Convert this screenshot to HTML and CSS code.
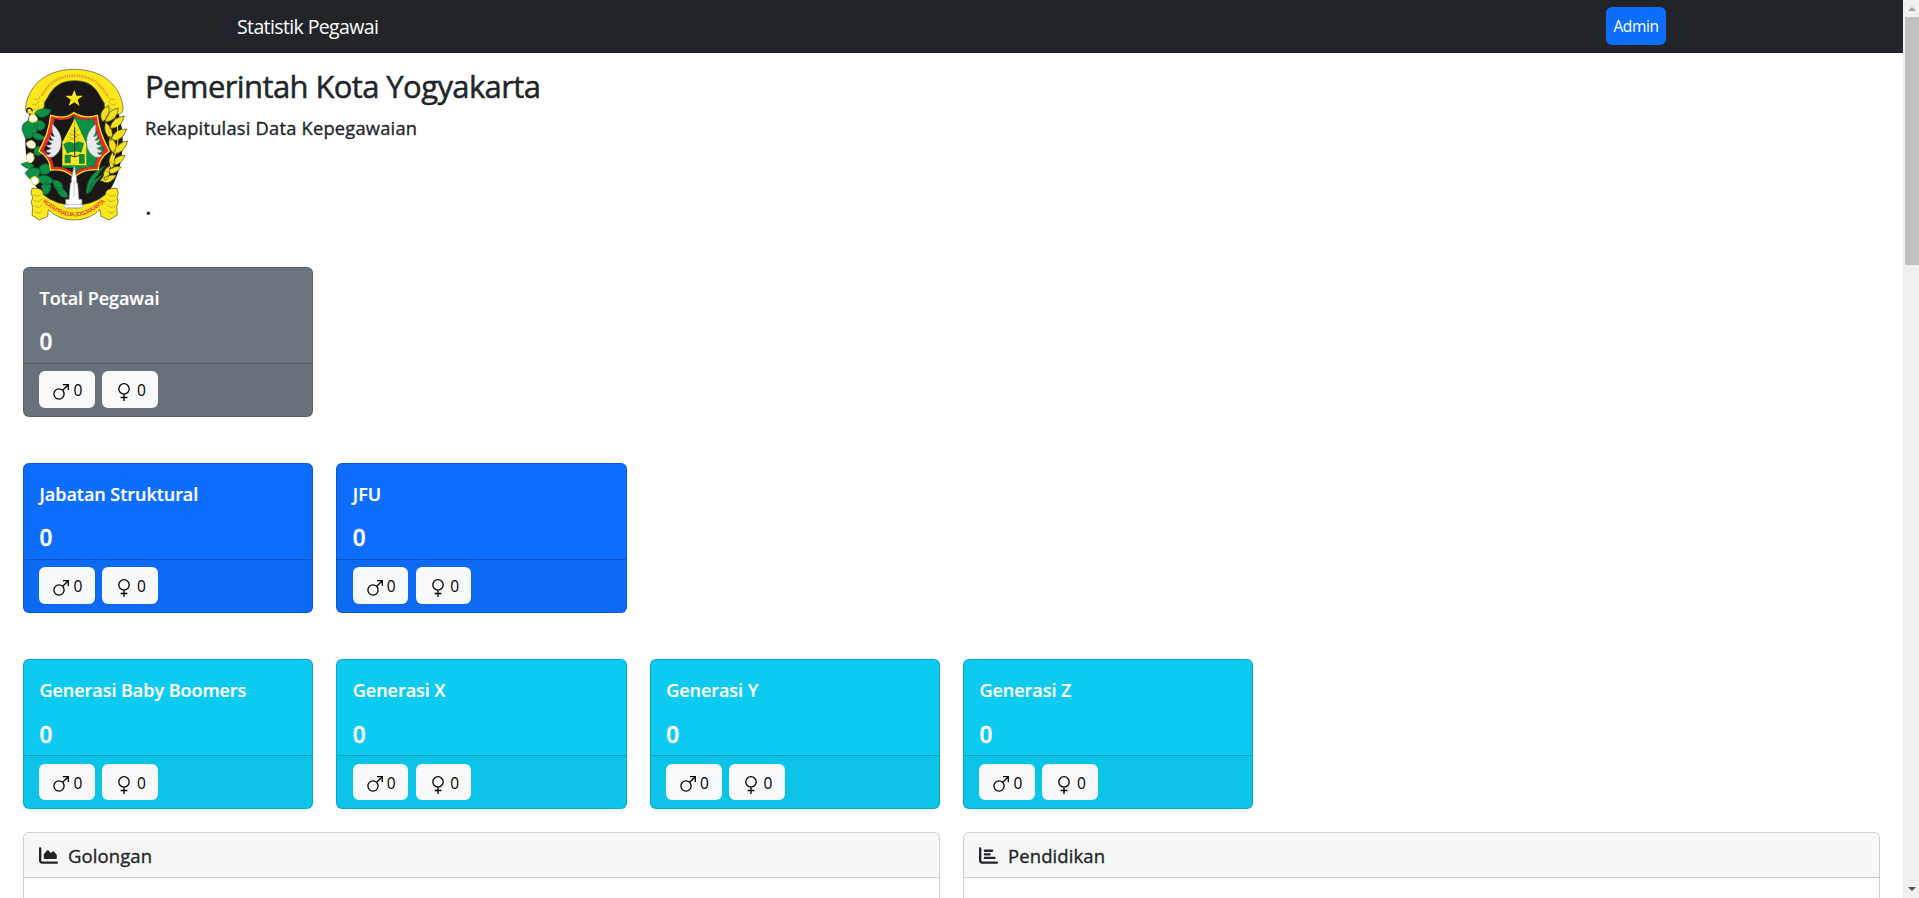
FILE: index.html
```html
<!DOCTYPE html>
<html lang="id">
<head>
<meta charset="utf-8">
<title>Statistik Pegawai</title>
<link rel="stylesheet" href="styles.css">
</head>
<body>
<svg width="0" height="0" class="defs">
  <symbol id="male" viewBox="0 0 16 16"><path d="M9.700 6.300 15.3.8M10 .7h5.3V6" fill="none" stroke="#000" stroke-width="1.3"/><circle cx="6" cy="10" r="5.1" fill="none" stroke="#000" stroke-width="1.3"/></symbol>
  <symbol id="female" viewBox="0 0 12 18"><path d="M6 11.2V18M2.6 14.5h6.8" fill="none" stroke="#000" stroke-width="1.3"/><circle cx="6" cy="5.9" r="5.2" fill="none" stroke="#000" stroke-width="1.3"/></symbol>
</svg>
<div class="page">
  <nav class="navbar"><span class="brand">Statistik Pegawai</span><a class="admin">Admin</a></nav>
  <header class="heading">
    <svg class="logo" viewBox="60 50 330 465">
      <ellipse cx="222" cy="275" rx="146" ry="213" fill="#1a1717"/>
      <path d="M77 168C90 90 155 57 223 57s133 33 146 111q3 25-20 24c-22 2-38-10-36-33l-12-20C284 105 262 91 223 91s-63 17-80 50l-10 16c2 23-12 37-34 35q-24 0-22-24z" fill="#fbe81c" stroke="#55501c" stroke-width="2"/>
      <path d="M126 136C150 91 185 76 224 76s74 17 98 60" fill="none" stroke="#f09a20" stroke-width="8" stroke-dasharray="4 3"/>
      <path d="m223 118 6 18 20 0-16 12 6 19-16-11-17 11 6-19-16-12h20z" fill="#fbe81c"/>
      <path d="M82 187c-8-16 14-18 15-4M98 195q28 160 92 245" fill="none" stroke="#1a1717" stroke-width="4"/>
      <g fill="#f3e01c" stroke="#4b4618" stroke-width="2">
        <path d="M325 165q-35 22-17 49 27-15 17-49zM355 173q-35 7-40 42 37-2 40-42zM373 197q-36 4-44 37 35 2 44-37zM380 236q-34-2-49 33 35 8 49-33zM383 272q-31 2-43 37 32 3 43-37zM376 315q-25-2-44 24 25 16 44-24zM364 350q-22-6-45 13 21 18 45-13zM316 215q-8 37 18 51 12-27-18-51zM330 257q-12 38 15 54 13-30-15-54zM338 305q-20 27-3 51 18-20 3-51zM326 347q-25 20-10 44 20-17 10-44zM350 375q-25-5-48 14 23 22 48-14z"/>
      </g>
      <path d="M347 205Q374 300 302 392" fill="none" stroke="#fbe81c" stroke-width="3"/>
      <g fill="#0d9145" stroke="#176036" stroke-width="2">
        <path d="M104 188q15-19 49-10-8 26-35 22zM66 238q-2-26 27-26 26 6 18 32-18 25-35 19zM103 216q22-16 34 8-7 24-31 12zM96 247q22-2 42 17-24 12-39-4zM104 291q26-9 29 13-17 21-31 5zM63 341q22-12 40 6-13 15-34 0zM75 369q16-24 44-13 7 28-29 30zM119 349q20-20 39 7-18 24-37 13zM113 379q35-12 47 14-21 20-43 1zM124 407q17-20 29-1-2 28-21 27zM158 389q32 0 31 29-24 15-31-29zM168 410q32 2 35 30-26 8-35-30z"/>
        <path d="M259 430q-2-57 57-84-33 32-49 81zM268 423q0-30 43-51-30 27-38 51z"/>
      </g>
      <g fill="#fff" stroke="#e5d719" stroke-width="3"><path d="M87 199q9-14 22-1 8 13-4 17-10 3-18-3zM80 277q14-13 25 1 6 16-9 16-17 0-16-17zM80 313q12-11 21 0 4 18-8 24-17 1-13-24zM93 384q11-11 22 1 6 12-7 18-15 1-15-19z"/></g>
      <path d="M221 187c-19 16-40 17-69 8-4 40-14 66-35 107 27 17 34 37 35 57 35-3 49 5 70 22 20-17 38-25 73-23 0-23 10-39 33-56-20-36-32-65-36-107-30 9-50 6-71-8z" fill="#e52a27" stroke="#fbe81c" stroke-width="4"/>
      <path d="M221 196c-19 14-37 16-57 9-5 39-12 58-34 94 21 16 29 31 31 50 28-1 44 6 60 20 18-15 35-20 63-20 1-20 9-35 29-50-17-32-27-57-33-94-23 6-42 5-59-9z" fill="#1a1717"/>
      <path d="M221 196c17 14 36 15 59 9 5 37 16 62 33 94-20 15-28 30-29 50-28 0-45 5-63 20z" fill="#0d9145"/>
      <path d="m224 205-37 71 0 75 6-3h62l4 3 0-71z" fill="#fbe81c"/>
      <path d="M224 214v102M214 238l21 17M208 248l31 18M202 258l43 20M236 237l-25 20M242 251l-44 24" stroke="#a79b18" stroke-width="2"/>
      <path d="M190 282q15-12 31-3 18-9 31 0l-8 28q-22-8-43 3zM194 313h18v26h-18zM237 311h17v29h-17zM187 345h71v7h-71z" fill="#118a40"/>
      <path d="M224 231v88M209 315q15 9 30 0" stroke="#2d3119" stroke-width="3" fill="none"/>
      <g id="wing" fill="#e9eaed" stroke="#848b91" stroke-width="1.5"><path d="M157 221q28 25 27 53 0 32-25 46-20 2-21-5 11-1 15-8-12 1-15-6 10-2 16-8-12-1-15-9 11 2 17-4-10-5-12-13 10 5 16 3-9-8-9-17 7 6 13 6-8-11-7-20-1-10 0-18z"/></g>
      <use href="#wing" transform="matrix(-1 0 0 1 444 0)"/>
      <path d="M96 414q35-4 34 19 37 31 93 31 57 0 93-31 0-21 35-19 8 14 0 28 8 14-1 27l2 25-25 15-24-11-3-20q-32 31-77 31-47 0-78-31l-2 20-25 11-22-14 2-26q-9-13 0-27-8-14-2-28z" fill="#fbe81c" stroke="#55501c" stroke-width="2"/>
      <path d="M100 433q17 11 23-3M101 449q19 11 25-4M102 466q17 12 25-4M104 484q14 9 23-3M348 433q-19 11-23-3M346 449q-18 11-24-4M348 466q-18 12-25-4M344 484q-16 9-21-3M97 175q19 9 19-10M94 160q17 10 23-9M100 145q17 8 21-9M349 175q-19 9-22-10M350 160q-17 10-23-9M346 145q-17 8-24-9" fill="none" stroke="#ac9c22" stroke-width="2"/>
      <path d="m223 342 7 43v12h3l4 50h9v15h-5v11h-39v-11h-5v-15h10l4-50h3v-12z" fill="#fff" stroke="#777" stroke-width="2"/>
      <path d="M193 463h55v9h-55zM222 389v50" fill="#fff" stroke="#aaa" stroke-width="2"/>
      <path id="ribbon" d="M128 454Q222 544 318 452" fill="none"/>
      <text class="ribbon"><textPath href="#ribbon" textLength="214">KOTA PRADJA JOGJAKARTA</textPath></text>
    </svg>
    <div class="titles"><h1>Pemerintah Kota Yogyakarta</h1><h5>Rekapitulasi Data Kepegawaian</h5><div class="dot">.</div></div>
  </header>
  <main class="content">
    <section class="row" id="r1"></section>
    <section class="row" id="r2"></section>
    <section class="row" id="r3"></section>
    <section class="panels">
      <article class="panel"><h5 class="panel-head"><svg viewBox="0 0 512 512"><path d="M64 64c0-17.700-14.300-32-32-32S0 46.300 0 64V400c0 44.200 35.800 80 80 80H480c17.700 0 32-14.300 32-32s-14.300-32-32-32H80c-8.800 0-16-7.200-16-16V64zm96 288H448c17.700 0 32-14.300 32-32V251.800c0-7.600-2.700-15-7.700-20.800l-65.800-76.800c-12.100-14.200-33.700-15-46.900-1.800l-21 21c-10 10-26.400 9.200-35.400-1.600l-39.200-47c-12.600-15.100-35.700-15.400-48.700-.6L135.900 215c-5.100 5.800-7.900 13.300-7.900 21.100v84c0 17.700 14.300 32 32 32z"/></svg><span>Golongan</span></h5></article>
      <article class="panel"><h5 class="panel-head"><svg viewBox="0 0 512 512"><path d="M32 32c17.700 0 32 14.300 32 32V400c0 8.800 7.200 16 16 16H480c17.700 0 32 14.300 32 32s-14.300 32-32 32H80c-44.200 0-80-35.800-80-80V64C0 46.300 14.300 32 32 32zm96 96c0-17.700 14.300-32 32-32l192 0c17.700 0 32 14.300 32 32s-14.300 32-32 32H160c-17.700 0-32-14.300-32-32zm32 64H288c17.700 0 32 14.300 32 32s-14.300 32-32 32H160c-17.700 0-32-14.300-32-32s14.300-32 32-32zm0 96H416c17.700 0 32 14.300 32 32s-14.300 32-32 32H160c-17.700 0-32-14.300-32-32s14.300-32 32-32z"/></svg><span>Pendidikan</span></h5></article>
    </section>
  </main>
</div>
<aside class="scrollbar"><i class="up"></i><i class="thumb"></i><i class="down"></i></aside>
<script src="cards.js"></script>
</body>
</html>
```

FILE: styles.css
```css
*{box-sizing:border-box}
body{margin:0;height:898px;overflow:hidden;display:flex;background:#fff;color:#212529;font:16px/24px "Open Sans","Noto Sans",sans-serif}
.defs{position:absolute}
h1,h5,p{margin:0}
.page{flex:1;min-width:0}
.navbar{height:53px;background:#212529;display:flex;justify-content:space-between;align-items:flex-start;padding:7px 237px 0 237px;color:#fff}
.brand{font-size:19.5px;line-height:40px;letter-spacing:-.62px}
.admin{width:60px;height:38px;border-radius:6px;background:#0d6efd;color:#fff;font-size:15.5px;line-height:39px;text-align:center;letter-spacing:-.4px}
.heading{display:flex;height:214px;padding:13.700px 20px 0}
.logo{width:110px;height:155px;flex:none}
.ribbon{font:bold 18px "Liberation Sans",sans-serif;fill:#e54a22}
.titles{padding-left:15px}
h1{font-size:31px;line-height:39px;font-weight:500;letter-spacing:-.6px;-webkit-text-stroke:.5px}
.titles h5{font-size:18.300px;line-height:24px;font-weight:500;margin-top:10px;letter-spacing:.22px;-webkit-text-stroke:.35px}
.dot{font-size:24px;line-height:24px;font-weight:600;margin-top:54px}
.content{padding:0 23px}
.row{display:grid;grid-template-columns:repeat(6,1fr);gap:23px;height:196px}
#r3{height:173px}
.card{height:150px;border:1px solid rgba(0,0,0,.175);border-radius:6px;color:#fff;overflow:hidden}
.secondary{background-color:#6c757d}
.primary{background-color:#0d6efd}
.info{background-color:#0dcaf0}
.card-body{height:95px;padding:17px 15.500px 0}
.card-body h5{font-size:18px;line-height:26px;font-weight:600;letter-spacing:-.04px;-webkit-text-stroke:.2px}
.card-body p{font-size:22.500px;line-height:32px;font-weight:600;margin-top:15px;-webkit-text-stroke:.4px}
#r3 .card-body p{margin-top:16px}
.card-foot{height:54px;border-top:1px solid rgba(0,0,0,.175);background:rgba(0,0,0,.03);padding:7px 15.400px;display:flex;gap:7.300px}
#r3 .card-foot{padding-top:8px}
.btn{width:55.700px;height:37px;border-radius:6px;background:#f8f9fa;color:#000;display:flex;padding-left:14px}
#r3 .btn{height:36px}
#r3 .btn svg{margin-top:12px}
.btn span{line-height:38px;font-size:15.500px}
.male svg{width:16px;height:16px;margin:13px 4px 0 0}
.female svg{width:12px;height:18px;margin:12px 6.500px 0 2px}
.panels{display:grid;grid-template-columns:1fr 1fr;gap:23px}
.panel{height:66px;border:1px solid #cfcfcf;border-bottom:0;border-radius:6px 6px 0 0}
.panel-head{height:45px;border-bottom:1px solid #cfcfcf;background:#f7f7f7;border-radius:5px 5px 0 0;display:flex;align-items:center;padding:1px 0 0 15px;font-size:18.500px;font-weight:500;letter-spacing:.1px;-webkit-text-stroke:.35px}
.panel-head svg{width:19px;height:19px;margin-right:10px;fill:#212529}
.scrollbar{width:16px;background:#f0f0f0;display:flex;flex-direction:column;align-items:flex-end}
.up,.down{border:4px solid transparent;margin-right:3px}
.up{border-top:0;border-bottom-color:#a3a3a3;margin-top:7px}
.down{border-bottom:0;border-top-color:#505050;margin-top:auto;margin-bottom:7px}
.thumb{width:14px;height:248px;background:#c1c1c1;margin-top:6px}
```

FILE: cards.js
```js
const rows = {
  r1: ['secondary', ['Total Pegawai']],
  r2: ['primary', ['Jabatan Struktural', 'JFU']],
  r3: ['info', ['Generasi Baby Boomers', 'Generasi X', 'Generasi Y', 'Generasi Z']]
};
for (const [id, [color, titles]] of Object.entries(rows)) {
  document.getElementById(id).innerHTML = titles.map(t => `<article class="card ${color}">
    <div class="card-body"><h5>${t}</h5><p>0</p></div>
    <div class="card-foot"><a class="btn male"><svg><use href="#male"/></svg><span>0</span></a><a class="btn female"><svg><use href="#female"/></svg><span>0</span></a></div>
  </article>`).join('');
}
```
